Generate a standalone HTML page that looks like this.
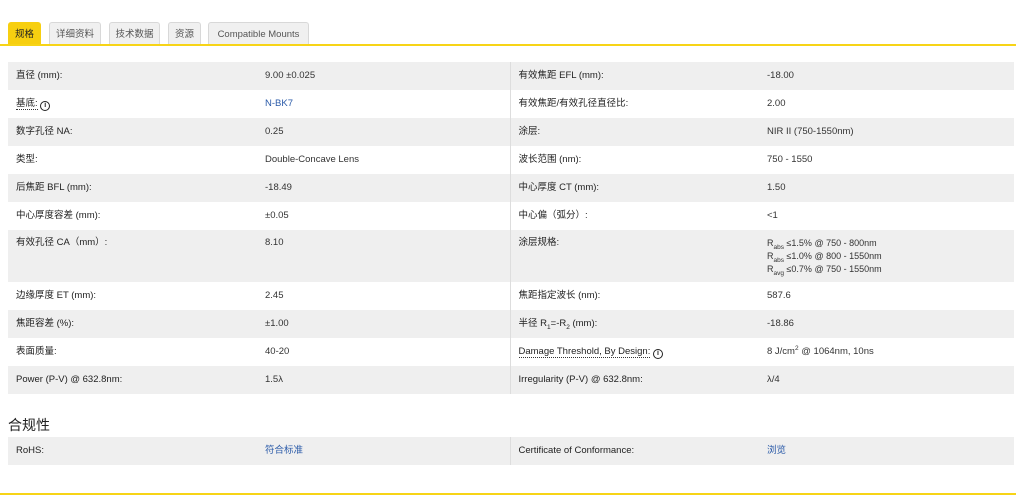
<!DOCTYPE html>
<html><head><meta charset="utf-8"><style>
body{margin:0;width:1016px;height:497px;background:#fff;font-family:"Liberation Sans","Noto Sans CJK SC",sans-serif;font-size:9.5px;color:#333;position:relative;overflow:hidden}
.tab{position:absolute;top:22px;height:23px;line-height:23px;background:#f0f0f0;border:1px solid #d8d8d8;border-bottom:none;border-radius:3px 3px 0 0;color:#555;font-size:9.5px;text-align:center;box-sizing:border-box}
.tab.on{background:#f7cf10;border-color:#f7cf10;color:#222}
.line{position:absolute;left:0;width:1016px;height:2px;background:#f7d417}
table{position:absolute;left:8px;width:1006px;border-collapse:collapse;table-layout:fixed}
td{padding:0 0 0 8px;height:28px;line-height:12px;vertical-align:middle;white-space:nowrap;overflow:hidden;box-sizing:border-box}
td:nth-child(odd){color:#222}
tr:nth-child(odd) td{background:#efefef}
td.c3{border-left:1px solid #ddd}
a{color:#2a5aa8;text-decoration:none}
.tall td{height:52px;vertical-align:top;padding-top:7px}
sub,sup{font-size:6.5px;line-height:0}
.dot{border-bottom:1px dotted #333}
.i{display:inline-block;width:8px;height:8px;border:1.5px solid #222;border-radius:50%;font-size:7px;line-height:8px;text-align:center;font-weight:bold;vertical-align:-1px}
</style></head><body>
<div class="tab on" style="left:8px;width:33px">规格</div>
<div class="tab" style="left:49px;width:52px">详细资料</div>
<div class="tab" style="left:109px;width:51px">技术数据</div>
<div class="tab" style="left:168px;width:33px">资源</div>
<div class="tab" style="left:208px;width:101px">Compatible Mounts</div>
<div class="line" style="top:44px"></div>
<table style="top:62px">
<colgroup><col style="width:249px"><col style="width:253px"><col style="width:249px"><col></colgroup>
<tr><td>直径 (mm):</td><td>9.00 ±0.025</td><td class="c3">有效焦距 EFL (mm):</td><td>-18.00</td></tr>
<tr><td><span class="dot">基底:</span> <span class="i">i</span></td><td><a>N-BK7</a></td><td class="c3">有效焦距/有效孔径直径比:</td><td>2.00</td></tr>
<tr><td>数字孔径 NA:</td><td>0.25</td><td class="c3">涂层:</td><td>NIR II (750-1550nm)</td></tr>
<tr><td>类型:</td><td>Double-Concave Lens</td><td class="c3">波长范围 (nm):</td><td>750 - 1550</td></tr>
<tr><td>后焦距 BFL (mm):</td><td>-18.49</td><td class="c3">中心厚度 CT (mm):</td><td>1.50</td></tr>
<tr><td>中心厚度容差 (mm):</td><td>±0.05</td><td class="c3">中心偏（弧分）:</td><td>&lt;1</td></tr>
<tr class="tall"><td>有效孔径 CA（mm）:</td><td>8.10</td><td class="c3">涂层规格:</td><td style="line-height:13px;font-size:9px">R<sub>abs</sub> ≤1.5% @ 750 - 800nm<br>R<sub>abs</sub> ≤1.0% @ 800 - 1550nm<br>R<sub>avg</sub> ≤0.7% @ 750 - 1550nm</td></tr>
<tr><td>边缘厚度 ET (mm):</td><td>2.45</td><td class="c3">焦距指定波长 (nm):</td><td>587.6</td></tr>
<tr><td>焦距容差 (%):</td><td>±1.00</td><td class="c3">半径 R<sub>1</sub>=-R<sub>2</sub> (mm):</td><td>-18.86</td></tr>
<tr><td>表面质量:</td><td>40-20</td><td class="c3"><span class="dot">Damage Threshold, By Design:</span> <span class="i">i</span></td><td>8 J/cm<sup>2</sup> @ 1064nm, 10ns</td></tr>
<tr><td>Power (P-V) @ 632.8nm:</td><td>1.5λ</td><td class="c3">Irregularity (P-V) @ 632.8nm:</td><td>λ/4</td></tr>
</table>
<div style="position:absolute;left:8px;top:415px;font-size:14px;color:#222">合规性</div>
<table style="top:437px">
<colgroup><col style="width:249px"><col style="width:253px"><col style="width:249px"><col></colgroup>
<tr><td style="height:27px">RoHS:</td><td><a>符合标准</a></td><td class="c3">Certificate of Conformance:</td><td><a>浏览</a></td></tr>
</table>
<div class="line" style="top:493px"></div>
</body></html>
